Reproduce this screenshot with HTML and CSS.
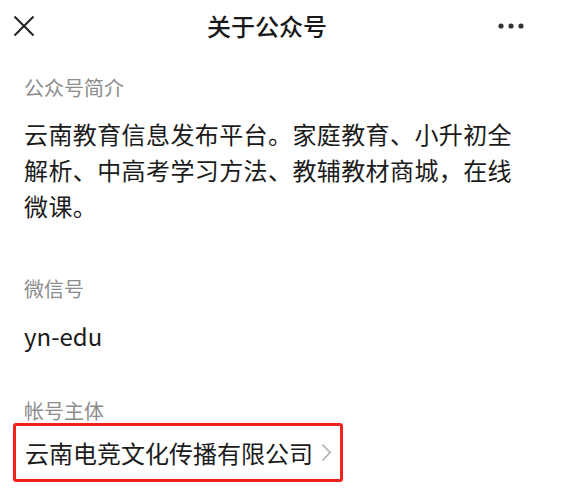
FILE: index.html
```html
<!DOCTYPE html>
<html lang="zh-CN">
<head>
<meta charset="utf-8">
<title>关于公众号</title>
<link rel="stylesheet" href="styles.css">
</head>
<body>
<div class="page">
  <header class="nav">
    <svg class="nav-close" width="22" height="22" viewBox="0 0 22 22">
      <path d="M1.5 1.5 L20.5 20.5 M20.5 1.5 L1.5 20.5" stroke="#222" stroke-width="2" fill="none" stroke-linecap="butt"/>
    </svg>
    <div class="nav-title">关于公众号</div>
    <svg class="nav-more" width="28" height="8" viewBox="0 0 28 8">
      <circle cx="4" cy="4" r="2.6" fill="#333"/>
      <circle cx="14" cy="4" r="2.6" fill="#333"/>
      <circle cx="24" cy="4" r="2.6" fill="#333"/>
    </svg>
  </header>
  <main class="content">
    <div class="label first">公众号简介</div>
    <div class="value intro">云南教育信息发布平台。家庭教育、小升初全解析、中高考学习方法、教辅教材商城，在线微课。</div>
    <div class="label mid">微信号</div>
    <div class="value">yn-edu</div>
    <div class="label last">帐号主体</div>
    <div class="subject">
      <span class="subject-name">云南电竞文化传播有限公司</span>
      <svg class="chevron" width="11" height="19" viewBox="0 0 11 19">
        <path d="M1.5 1.5 L9 9.5 L1.5 17.5" stroke="#b4b4b4" stroke-width="1.8" fill="none"/>
      </svg>
    </div>
  </main>
</div>
</body>
</html>
```
FILE: styles.css
```css
html, body {
  margin: 0;
  padding: 0;
  background: #ffffff;
}
.page {
  width: 568px;
  height: 493px;
  overflow: hidden;
  font-family: "Noto Sans CJK SC", "Noto Sans", sans-serif;
  color: #1b1b1b;
}
.nav {
  height: 52px;
  display: flex;
  align-items: center;
  padding: 0 43px 0 13px;
}
.nav-close {
  display: block;
  flex: none;
}
.nav-title {
  margin-left: 172px;
  font-size: 24px;
  line-height: 32px;
  font-weight: 500;
  color: #191919;
}
.nav-more {
  margin-left: auto;
  display: block;
}
.content {
  padding: 0 24px;
}
.label {
  font-size: 20px;
  line-height: 28px;
  color: #8c8c8c;
}
.label.first {
  margin-top: 22px;
}
.label.mid {
  margin-top: 51px;
}
.label.last {
  margin-top: 45px;
  line-height: 24px;
}
.value {
  font-size: 24px;
  line-height: 36px;
  color: #1b1b1b;
}
.intro {
  margin-top: 14px;
  max-width: 496px;
  letter-spacing: 0.4px;
}
.mid + .value {
  margin-top: 15px;
}
.subject {
  margin-top: 0;
  margin-left: -11px;
  width: 330px;
  height: 59px;
  box-sizing: border-box;
  border: 3px solid #f2211b;
  border-radius: 3px;
  display: flex;
  align-items: center;
  padding-left: 9px;
}
.subject-name {
  font-size: 24px;
  line-height: 32px;
  color: #1b1b1b;
}
.chevron {
  display: block;
  margin-left: 8px;
}
```
